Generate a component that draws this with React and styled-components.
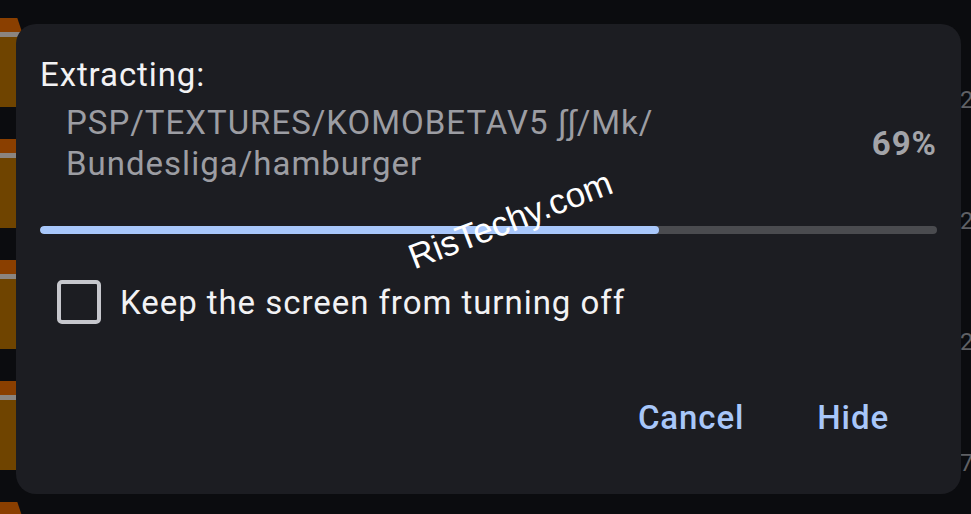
import React from 'react';
import styled, { createGlobalStyle } from 'styled-components';

// Android "Extracting" progress dialog over a file list
const GlobalStyle = createGlobalStyle`
  html, body {
    margin: 0;
    padding: 0;
    width: 971px;
    height: 514px;
    overflow: hidden;
    background: #0b0c0f;
    font-family: Roboto, "Noto Sans", "Liberation Sans", sans-serif;
  }
`;

const Screen = styled.div`
  position: relative;
  width: 971px;
  height: 514px;
  overflow: hidden;
`;

/* file list behind the dialog */
const FileList = styled.div`
  display: flex;
  flex-direction: column;
  padding-top: 18px;
`;

const FileRow = styled.div`
  display: flex;
  justify-content: space-between;
  align-items: flex-start;
  height: 121px;
`;

const Folder = styled.div`
  display: flex;
  flex-direction: column;
  width: 80px;
  height: 89px;
  margin-left: -56px;
`;

const FolderTab = styled.div`
  height: 14px;
  width: 78px;
  background: #8a3f00;
  border-radius: 0 4px 0 0;
  clip-path: polygon(0 0, 94% 0, 100% 100%, 0 100%);
`;

const FolderLine = styled.div`
  height: 5px;
  background: #8b8580;
`;

const FolderBody = styled.div`
  flex: 1;
  background: #6f4400;
`;

const DateClip = styled.div`
  width: 11px;
  overflow: hidden;
  white-space: nowrap;
  margin-top: 68px;
  font-size: 24px;
  color: #5f6064;
`;

/* dialog */
const Dialog = styled.div`
  position: absolute;
  left: 16px;
  top: 24px;
  width: 945px;
  height: 470px;
  box-sizing: border-box;
  padding: 31px 24px 0 24px;
  background: #1c1d22;
  border-radius: 20px;
  display: flex;
  flex-direction: column;
`;

const Title = styled.div`
  font-size: 33px;
  line-height: 40px;
  letter-spacing: 0.9px;
  color: #f2f2f4;
`;

const PathRow = styled.div`
  display: flex;
  align-items: center;
  justify-content: space-between;
  margin-top: 7px;
  padding-left: 26px;
`;

const PathText = styled.div`
  font-size: 33px;
  line-height: 41px;
  letter-spacing: 1px;
  color: #9c9da3;
  max-width: 640px;
`;

const Percent = styled.div`
  font-size: 33px;
  font-weight: 700;
  letter-spacing: 1px;
  color: #a3a4a9;
`;

const Track = styled.div`
  height: 8px;
  margin-top: 42px;
  border-radius: 4px;
  background: #4a4b4f;
  overflow: hidden;
`;

const Fill = styled.div`
  height: 100%;
  border-radius: 4px;
  background: #a8c7fa;
`;

const CheckRow = styled.label`
  display: flex;
  align-items: center;
  gap: 19px;
  margin-top: 46px;
  padding-left: 17px;
`;

const Box = styled.span`
  width: 44px;
  height: 44px;
  box-sizing: border-box;
  border: 4px solid #c6c7cd;
  border-radius: 5px;
`;

const CheckText = styled.span`
  font-size: 33px;
  letter-spacing: 0.95px;
  color: #f2f2f4;
`;

const Actions = styled.div`
  display: flex;
  justify-content: flex-end;
  gap: 73px;
  margin-top: 74px;
  padding-right: 48px;
`;

const ActionButton = styled.button`
  background: none;
  border: none;
  padding: 0;
  font-family: inherit;
  font-size: 33px;
  font-weight: 500;
  letter-spacing: 0.9px;
  color: #a8c7fa;
`;

const Watermark = styled.div`
  position: absolute;
  left: 401px;
  top: 213px;
  font-family: "Liberation Sans", Arial, sans-serif;
  font-size: 35px;
  color: #ffffff;
  transform: rotate(-21deg);
  transform-origin: left bottom;
  white-space: nowrap;
`;

const rows = ['2', '2', '2', '7', ''];

export default function App() {
  const progress = 69;
  return (
    <Screen>
      <GlobalStyle />
      <FileList>
        {rows.map((d, i) => (
          <FileRow key={i}>
            <Folder>
              <FolderTab />
              <FolderLine />
              <FolderBody />
            </Folder>
            <DateClip>{d}</DateClip>
          </FileRow>
        ))}
      </FileList>
      <Dialog>
        <Title>Extracting:</Title>
        <PathRow>
          <PathText>PSP/TEXTURES/KOMOBETAV5 ∫∫/Mk/ Bundesliga/hamburger</PathText>
          <Percent>{progress}%</Percent>
        </PathRow>
        <Track>
          <Fill style={{ width: `${progress}%` }} />
        </Track>
        <CheckRow>
          <Box />
          <CheckText>Keep the screen from turning off</CheckText>
        </CheckRow>
        <Actions>
          <ActionButton>Cancel</ActionButton>
          <ActionButton>Hide</ActionButton>
        </Actions>
        <Watermark>RisTechy.com</Watermark>
      </Dialog>
    </Screen>
  );
}
